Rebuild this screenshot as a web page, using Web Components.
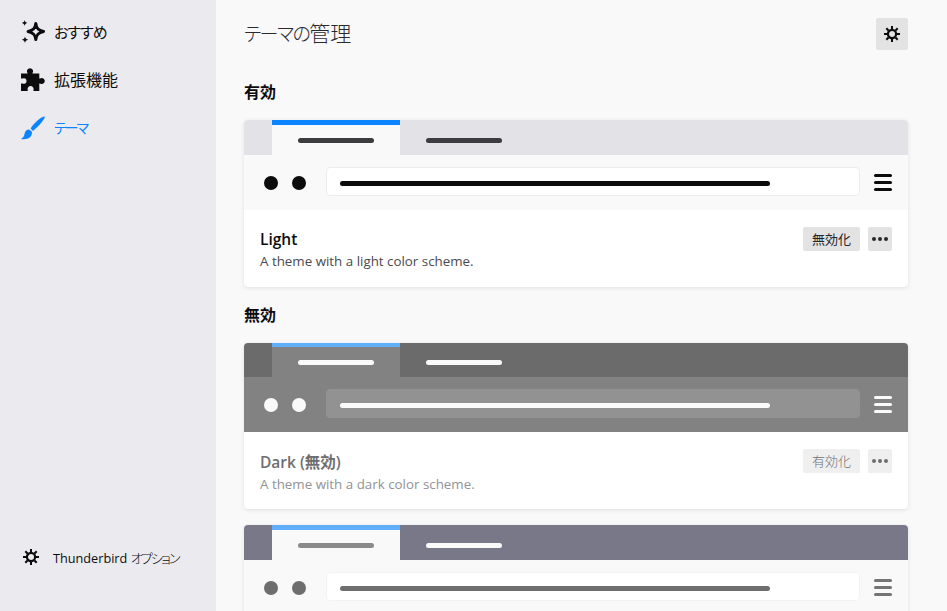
<!DOCTYPE html>
<html lang="ja">
<head>
<meta charset="utf-8">
<title>テーマの管理</title>
<style>
    html, body { margin: 0; height: 611px; overflow: hidden; }
    body {
        display: flex;
        font-family: "Open Sans", "Noto Sans CJK JP", sans-serif;
        font-feature-settings: "palt";
        color: #0c0c0d;
        background: #f9f9fa;
    }
    .kana { letter-spacing: -1.5px; }
    .kanji { font-size: 21px; }
    .opt { font-size: 13px; font-weight: 300; letter-spacing: -1.8px; }
</style>
</head>
<body>
    <addons-sidebar>
        <nav-item icon="sparkle" style="font-size:15px;letter-spacing:-1px">おすすめ</nav-item>
        <nav-item icon="puzzle" style="font-size:16px">拡張機能</nav-item>
        <nav-item icon="brush" style="font-size:14px;letter-spacing:-2px" selected>テーマ</nav-item>
        <options-link slot="footer">Thunderbird <span class="opt">オプション</span></options-link>
    </addons-sidebar>

    <addons-main>
        <page-header><span class="kana">テーマの</span><span class="kanji">管理</span></page-header>

        <section-title>有効</section-title>
        <theme-card variant="light" action="無効化">
            <span slot="name">Light</span>
            <span slot="desc">A theme with a light color scheme.</span>
        </theme-card>

        <section-title>無効</section-title>
        <theme-card variant="dark" action="有効化" disabled>
            <span slot="name">Dark (無効)</span>
            <span slot="desc">A theme with a dark color scheme.</span>
        </theme-card>

        <theme-card variant="system" disabled></theme-card>
    </addons-main>

<script>
const GEAR = `<svg viewBox="0 0 16 16" width="16" height="16" fill="none" stroke="currentColor">
    <circle cx="8" cy="8" r="4.1" stroke-width="2.2"/>
    <path stroke-width="2" d="M8 0v3M8 13v3M0 8h3M13 8h3M2.3 2.3l2.2 2.2M11.5 11.5l2.2 2.2M13.700 2.300l-2.200 2.200M4.500 11.500l-2.200 2.200"/>
</svg>`;

const ICONS = {
    sparkle: `<svg viewBox="0 0 24 24" width="24" height="24">
        <path fill="none" stroke="currentColor" stroke-width="3" stroke-linejoin="round" d="M14.800 3.500C15.300 8 17 10.300 22.500 11.500 17 12.700 15.300 15 14.800 19.500 14.300 15 12.600 12.700 7.100 11.500 12.600 10.300 14.300 8 14.800 3.500z"/>
        <path fill="currentColor" d="M3.600 0c.4 1.900 1 2.500 3 3-2 .4-2.600 1.100-3 3-.4-1.900-1-2.600-3-3 2-.5 2.600-1.100 3-3zM4 16.500c.4 2.100 1.100 2.800 3.300 3.300-2.200.5-2.900 1.100-3.300 3.200-.4-2.100-1.100-2.700-3.300-3.200 2.200-.5 2.900-1.200 3.300-3.300z"/>
    </svg>`,
    puzzle: `<svg viewBox="0 0 24 24" width="24" height="24" fill="currentColor">
        <path d="M0 5.500h6.500V5a3 3 0 1 1 5 0v.5h6.800v5h.7a3 3 0 1 1 0 5h-.7V23H12.500v-1.200a3 3 0 1 0-5.800 0V23H0v-7.500h1.500a2.800 2.800 0 1 0 0-5H0z"/>
    </svg>`,
    brush: `<svg viewBox="0 0 24 24" width="24" height="24" fill="currentColor">
        <path d="M23 .5C20 1 13 7 9.600 12.400l2.400 2.500C17 11 23 4.200 23.800 1.200 23.900.7 23.500.4 23 .5z"/>
        <path d="M8.300 13.400C5.300 13.400 4 15.500 3.500 18 3.200 20 2 22 0 23c4 .7 8.500-.3 10-3 1-1.800 1.100-3.600.8-4.300z"/>
    </svg>`
};

class AddonsSidebar extends HTMLElement {
    connectedCallback()
    {
        this.attachShadow({mode: 'open'}).innerHTML = `
            <style>
                :host { display: flex; flex-direction: column; flex: none; width: 216px; height: 611px; box-sizing: border-box; padding: 8px 0 42px 21px; background: #ebebef; }
                nav { display: flex; flex-direction: column; flex: 1; }
            </style>
            <nav><slot></slot></nav>
            <slot name="footer"></slot>`;
    }
}

class NavItem extends HTMLElement {
    connectedCallback()
    {
        this.attachShadow({mode: 'open'}).innerHTML = `
            <style>
                :host { display: flex; align-items: center; gap: 9px; height: 48px; font-weight: 400; color: #0c0c0d; }
                :host([selected]) { color: #0a84ff; }
                svg { display: block; flex: none; }
                span { margin-bottom: 2px; }
            </style>
            ${ICONS[this.getAttribute('icon')]}
            <span><slot></slot></span>`;
    }
}

class OptionsLink extends HTMLElement {
    connectedCallback()
    {
        this.attachShadow({mode: 'open'}).innerHTML = `
            <style>
                :host { display: flex; align-items: center; gap: 14px; height: 24px; padding-left: 2px; font-size: 12.7px; color: #0c0c0d; }
                svg { display: block; flex: none; }
            </style>
            ${GEAR}
            <span><slot></slot></span>`;
    }
}

class AddonsMain extends HTMLElement {
    connectedCallback()
    {
        this.attachShadow({mode: 'open'}).innerHTML = `
            <style>
                :host { display: block; flex: 1; height: 611px; overflow: hidden; box-sizing: border-box; padding: 18px 39px 0 28px; }
            </style>
            <slot></slot>`;
    }
}

class PageHeader extends HTMLElement {
    connectedCallback()
    {
        this.attachShadow({mode: 'open'}).innerHTML = `
            <style>
                :host { display: flex; align-items: center; justify-content: space-between; height: 32px; margin-bottom: 30px; font-size: 19px; font-weight: 300; color: #2a2a2e; }
                button { display: grid; place-items: center; width: 32px; height: 32px; padding: 0; border: 0; border-radius: 2px; background: #e3e3e4; color: #0c0c0d; }
                svg { display: block; }
                span { margin-bottom: 4px; }
            </style>
            <span><slot></slot></span>
            <button>${GEAR}</button>`;
    }
}

class SectionTitle extends HTMLElement {
    connectedCallback()
    {
        this.attachShadow({mode: 'open'}).innerHTML = `
            <style>
                :host { display: block; height: 24px; margin: 0 0 16px; line-height: 24px; font-size: 16px; font-weight: 700; color: #0c0c0d; }
            </style>
            <slot></slot>`;
    }
}

class ThemePreview extends HTMLElement {
    connectedCallback()
    {
        this.attachShadow({mode: 'open'}).innerHTML = `
            <style>
                :host { display: block; }
                .line { height: 5px; border-radius: 3px; }
                .strip { display: flex; height: var(--strip-h, 35px); padding-left: 28px; background: var(--frame); }
                .tab { display: flex; align-items: center; justify-content: center; box-sizing: border-box; width: 128px; border-top: var(--accent-h, 5px) solid var(--accent); }
                .tab .line { width: 76px; }
                .tab.on { background: var(--tab); }
                .tab.on .line { background: var(--tab-line); }
                .tab.off .line { background: var(--bgtab-line); }
                .tab.off { border-top-color: transparent; }
                .toolbar { display: flex; align-items: center; height: 55px; background: var(--toolbar); padding: 0 16px 0 20px; }
                .dot { flex: none; width: 14px; height: 14px; margin-right: 14px; border-radius: 50%; background: var(--dot); }
                .url { display: flex; align-items: center; flex: 1; height: 29px; box-sizing: border-box; margin: 0 14px 2px 6px; padding: 0 89px 0 13px; border: 1px solid var(--url-border); border-radius: 4px; background: var(--url); }
                .url .line { flex: 1; margin-top: 4px; background: var(--url-line); }
                .menu { display: flex; flex-direction: column; gap: 4px; flex: none; width: 18px; margin-top: -1px; }
                .menu i { display: block; height: 3px; border-radius: 1.5px; background: var(--menu); }
            </style>
            <div class="strip">
                <div class="tab on"><div class="line"></div></div>
                <div class="tab off"><div class="line"></div></div>
            </div>
            <div class="toolbar">
                <div class="dot"></div>
                <div class="dot"></div>
                <div class="url"><div class="line"></div></div>
                <div class="menu"><i></i><i></i><i></i></div>
            </div>`;
    }
}

class ThemeCard extends HTMLElement {
    connectedCallback()
    {
        this.attachShadow({mode: 'open'}).innerHTML = `
            <style>
                :host { display: block; margin-bottom: 16px; border-radius: 4px; overflow: hidden; background: #fff; box-shadow: 0 1px 4px rgba(12,12,13,.1); }
                :host([variant=light]) {
                    --frame: #e3e3e7; --accent: #0a84ff; --tab: #f9f9fa; --tab-line: #3d3d3f; --bgtab-line: #3d3d3f;
                    --toolbar: #f9f9fa; --dot: #0c0c0d; --url: #fff; --url-border: #ececee; --url-line: #0c0c0d; --menu: #0c0c0d;
                }
                :host([variant=dark]) {
                    --frame: #6b6b6b; --accent: #60aefc; --tab: #828282; --tab-line: #fafafa; --bgtab-line: #fafafa;
                    --toolbar: #828282; --dot: #fafafa; --url: #929292; --url-border: #929292; --url-line: #fafafa; --menu: #fafafa;
                    --strip-h: 34px; --accent-h: 4px; --text-top: 1px;
                }
                :host([variant=system]) {
                    --frame: #787889; --accent: #60aefc; --tab: #f9f9fa; --tab-line: #8a8a8a; --bgtab-line: #fafafa;
                    --toolbar: #f9f9fa; --dot: #6e6e6e; --url: #fff; --url-border: #f3f3f4; --url-line: #6e6e6e; --menu: #757575;
                }
                .body { display: flex; justify-content: space-between; height: 77px; box-sizing: border-box; padding: 17px 16px 0; }
                .text { margin-top: var(--text-top, 0); }
                .name { font-size: 15.5px; font-weight: 600; line-height: 24px; color: #0c0c0d; }
                .desc { font-size: 13.35px; line-height: 20px; color: #4a4a4f; }
                .buttons { display: flex; gap: 8px; }
                button { height: 24px; padding: 0; border: 0; border-radius: 2px; background: #e3e3e4; color: #26262a; font: inherit; font-size: 13px; line-height: 24px; font-feature-settings: "palt"; }
                .act { width: 57px; }
                .more { display: grid; place-items: center; width: 24px; }
                .more svg { display: block; }
                :host([disabled]) .name { color: #6e6e70; }
                :host([disabled]) .desc { color: #929295; }
                :host([disabled]) button { background: #efeff0; color: #6e6e70; font-weight: 300; }
            </style>
            <theme-preview></theme-preview>
            <div class="body">
                <div class="text">
                    <div class="name"><slot name="name"></slot></div>
                    <div class="desc"><slot name="desc"></slot></div>
                </div>
                <div class="buttons">
                    <button class="act">${this.getAttribute('action') || ''}</button>
                    <button class="more"><svg viewBox="0 0 16 4" width="16" height="4" fill="currentColor"><circle cx="2" cy="2" r="2"/><circle cx="8" cy="2" r="2"/><circle cx="14" cy="2" r="2"/></svg></button>
                </div>
            </div>`;
    }
}

customElements.define('addons-sidebar', AddonsSidebar);
customElements.define('nav-item', NavItem);
customElements.define('options-link', OptionsLink);
customElements.define('addons-main', AddonsMain);
customElements.define('page-header', PageHeader);
customElements.define('section-title', SectionTitle);
customElements.define('theme-preview', ThemePreview);
customElements.define('theme-card', ThemeCard);
</script>
</body>
</html>
